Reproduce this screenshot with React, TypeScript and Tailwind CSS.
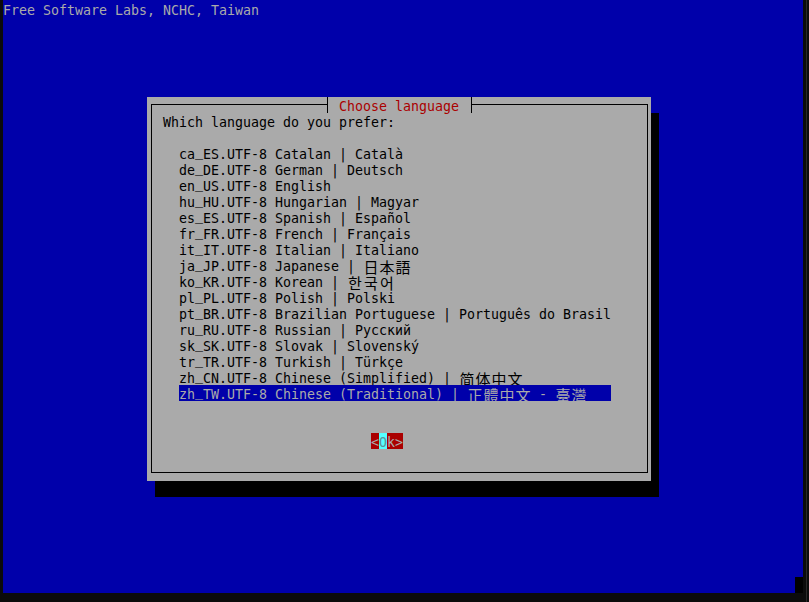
import React from 'react';

const items: { code: string; cjk?: string }[] = [
  { code: 'ca_ES.UTF-8 Catalan | Català' },
  { code: 'de_DE.UTF-8 German | Deutsch' },
  { code: 'en_US.UTF-8 English' },
  { code: 'hu_HU.UTF-8 Hungarian | Magyar' },
  { code: 'es_ES.UTF-8 Spanish | Español' },
  { code: 'fr_FR.UTF-8 French | Français' },
  { code: 'it_IT.UTF-8 Italian | Italiano' },
  { code: 'ja_JP.UTF-8 Japanese | 日本語', cjk: 'JP' },
  { code: 'ko_KR.UTF-8 Korean | 한국어', cjk: 'KR' },
  { code: 'pl_PL.UTF-8 Polish | Polski' },
  { code: 'pt_BR.UTF-8 Brazilian Portuguese | Português do Brasil' },
  { code: 'ru_RU.UTF-8 Russian | Русский' },
  { code: 'sk_SK.UTF-8 Slovak | Slovenský' },
  { code: 'tr_TR.UTF-8 Turkish | Türkçe' },
  { code: 'zh_CN.UTF-8 Chinese (Simplified) | 简体中文', cjk: 'SC' },
  { code: 'zh_TW.UTF-8 Chinese (Traditional) | 正體中文 - 臺灣', cjk: 'TC' },
];

const cjkFont: Record<string, string> = {
  JP: "font-['Noto_Sans_CJK_JP',sans-serif]",
  KR: "font-['Noto_Sans_CJK_KR',sans-serif]",
  SC: "font-['Noto_Sans_CJK_SC',sans-serif]",
  TC: "font-['Noto_Sans_CJK_TC',sans-serif]",
};

// wide chars take two terminal cells
const isWide = (ch: string) => ch.charCodeAt(0) >= 0x2e80;

function TermText({ text, cjk }: { text: string; cjk?: string }) {
  const chars = Array.from(text);
  return (
    <>
      {chars.map((ch, i) => {
        if (isWide(ch)) {
          return (
            <span
              key={i}
              className={`inline-block w-4 text-center text-[15px] leading-[20px] align-top ${cjk ? cjkFont[cjk] : ''}`}
            >
              {ch}
            </span>
          );
        }
        // the console font keeps the underscore inside its cell
        if (ch === '_') {
          return (
            <span key={i} className="relative -top-[3px]">
              _
            </span>
          );
        }
        return <React.Fragment key={i}>{ch}</React.Fragment>;
      })}
    </>
  );
}

export default function App() {
  const selected = 15;
  return (
    <div className="relative w-[809px] h-[602px] bg-[#0b0b0b] font-['DejaVu_Sans_Mono',monospace] text-[13.29px] leading-[20px] whitespace-pre">
      <div className="ml-[3px] w-[800px] h-[593px] bg-[#0000aa] pt-px flex flex-col items-start relative">
        <div className="h-4 text-[#aaaaaa]">Free Software Labs, NCHC, Taiwan</div>

        <div className="ml-[144px] mt-[80px] w-[504px] h-[384px] bg-[#aaaaaa] shadow-[8px_16px_0_0_#000] relative">
          <div className="ml-[4px] mt-[7px] w-[497px] h-[369px] border border-black pl-[11px] pt-[8px] flex flex-col items-start">
            <div className="h-4 text-black">Which language do you prefer:</div>

            <div className="mt-4 ml-4 flex flex-col">
              {items.map((it, i) => (
                <div
                  key={it.code}
                  className={`h-4 w-[432px] ${
                    i === selected ? 'bg-[#0000aa] text-[#aaaaaa]' : 'text-black'
                  }`}
                >
                  <TermText text={it.code} cjk={it.cjk} />
                </div>
              ))}
            </div>

            <div className="mt-8 ml-[208px] flex text-[#aaaaaa]">
              <span className="w-2 h-4 bg-[#aa0000]">&lt;</span>
              <span className="w-2 h-4 bg-[#55ffff] text-[#5f8f9a]">O</span>
              <span className="w-2 h-4 bg-[#aa0000]">k</span>
              <span className="w-2 h-4 bg-[#aa0000]">&gt;</span>
            </div>
          </div>

          {/* title sits over the top border line */}
          <div className="absolute left-[180px] top-0 h-4 w-[145px] border-x border-black bg-[#aaaaaa] pl-[11px] text-[#aa0000]">
            Choose language
          </div>
        </div>

        {/* text cursor */}
        <div className="absolute right-0 bottom-0 w-2 h-4 bg-black" />
      </div>
      <div className="absolute left-[806px] top-0 w-px h-[602px] bg-[#2a2a2a]" />
    </div>
  );
}
